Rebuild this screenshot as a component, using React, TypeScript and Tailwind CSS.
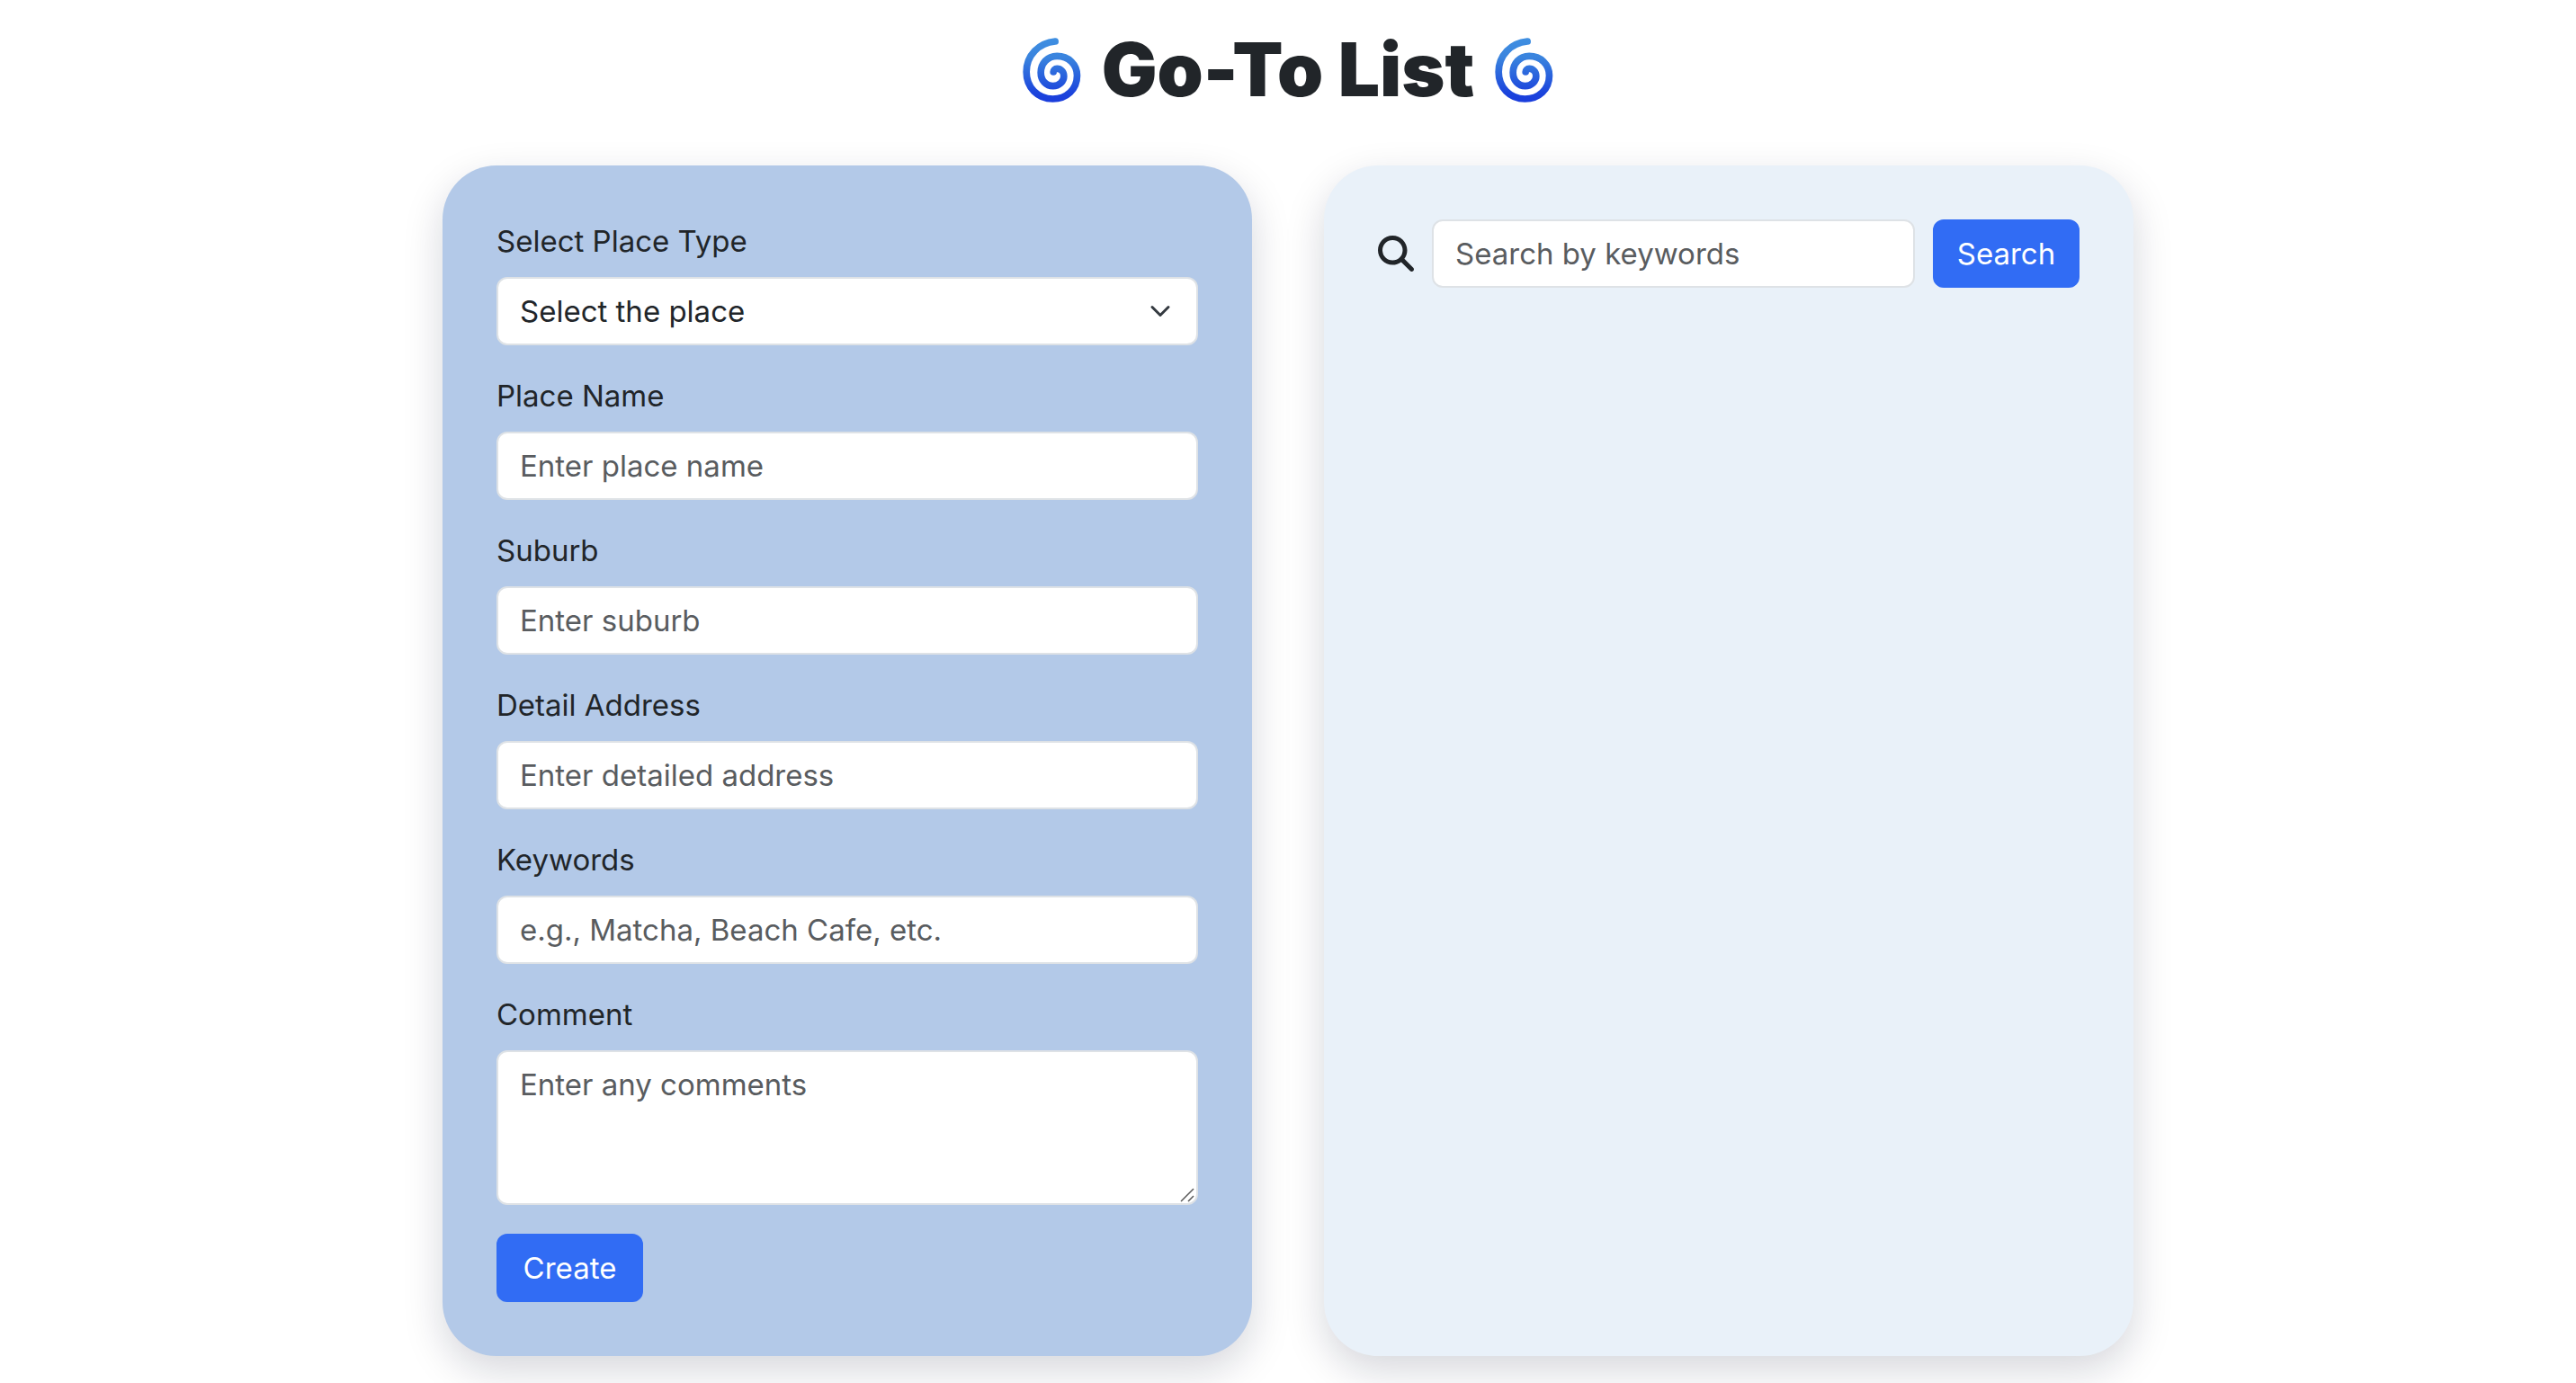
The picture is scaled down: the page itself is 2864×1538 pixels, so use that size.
import { useId } from "react";
import type { ReactNode } from "react";
import { FaMagnifyingGlass } from "react-icons/fa6";

const control =
  "block w-full rounded-xl border-2 border-[#dee2e6] bg-white px-6 py-3 text-[33px] leading-[48px] text-[#212529] placeholder:text-[#595c5f] placeholder:opacity-100 outline-none focus:border-[#86b7fe]";

const button =
  "min-w-[163px] shrink-0 cursor-pointer rounded-xl border-2 border-[#316cf4] bg-[#316cf4] px-6 py-3 text-[33px] leading-[48px] text-white hover:bg-[#2a5cd0]";

const card =
  "rounded-[60px] p-[60px] shadow-[0_16px_44px_rgba(10,18,50,0.17)]";

function Spiral() {
  const id = useId();
  return (
    <svg viewBox="45 33 200 222" className="h-[74px] w-[67px] shrink-0" fill="none" aria-hidden="true">
      <defs>
        <linearGradient id={id} gradientUnits="userSpaceOnUse" x1="0" y1="37" x2="0" y2="252">
          <stop offset="0" stopColor="#3f8fe1" />
          <stop offset="0.3" stopColor="#3a84de" />
          <stop offset="0.85" stopColor="#1b44dc" />
          <stop offset="1" stopColor="#1a3cdc" />
        </linearGradient>
      </defs>
      <path
        d="M156 48C102 53 60 94 60 150C60 202 98 240 148 240C194 240 229 208 229 162C229 124 200 97 162 97C130 97 108 122 108 152C108 178 125 197 149 197C169 197 185 182 185 164C185 149 174 139 162 139C155 139 150 144 150 150"
        stroke={`url(#${id})`}
        strokeWidth="23"
        strokeLinecap="round"
        strokeLinejoin="round"
      />
    </svg>
  );
}

function Field({ id, label, children }: { id: string; label: string; children: ReactNode }) {
  return (
    <div className="mb-8">
      <label htmlFor={id} className="mb-4 block">
        {label}
      </label>
      {children}
    </div>
  );
}

const textFields = [
  { id: "name", label: "Place Name", placeholder: "Enter place name" },
  { id: "suburb", label: "Suburb", placeholder: "Enter suburb" },
  { id: "address", label: "Detail Address", placeholder: "Enter detailed address" },
  { id: "keywords", label: "Keywords", placeholder: "e.g., Matcha, Beach Cafe, etc." },
];

export default function App() {
  return (
    <div className="overflow-x-hidden bg-white pb-[30px] font-['Inter',sans-serif] text-[33px] leading-[48px] text-[#212529]">
      <header className="flex items-center justify-center gap-[22px] pt-[30px] pb-[58px]">
        <Spiral />
        <h1 className="text-[82px] leading-[96px] font-black">Go-To List</h1>
        <Spiral />
      </header>

      <main className="mx-auto grid w-full max-w-[1880px] grid-cols-2 gap-20">
        <form className={`${card} bg-[#b3c9e8]`} onSubmit={(e) => e.preventDefault()}>
          <Field id="type" label="Select Place Type">
            <div className="relative">
              <select id="type" className={`${control} appearance-none pr-18`} defaultValue="">
                <option value="">Select the place</option>
                <option value="cafe">Cafe</option>
                <option value="restaurant">Restaurant</option>
              </select>
              <svg
                viewBox="0 0 16 16"
                className="pointer-events-none absolute top-[26px] right-[30px] size-6"
                fill="none"
                stroke="#343a40"
                strokeWidth="2"
                strokeLinecap="round"
                strokeLinejoin="round"
                aria-hidden="true"
              >
                <path d="m2 5 6 6 6-6" />
              </svg>
            </div>
          </Field>

          {textFields.map((f) => (
            <Field key={f.id} id={f.id} label={f.label}>
              <input id={f.id} type="text" placeholder={f.placeholder} className={control} />
            </Field>
          ))}

          <Field id="comment" label="Comment">
            <div className="relative">
              <textarea
                id="comment"
                rows={3}
                placeholder="Enter any comments"
                className={`${control} resize-none`}
              />
              <svg
                viewBox="0 0 16 16"
                className="pointer-events-none absolute right-1 bottom-[3px] size-4"
                stroke="#5a5a5a"
                strokeWidth="1.5"
                aria-hidden="true"
              >
                <path d="M1 15 15 1M9 15l6-6" />
              </svg>
            </div>
          </Field>

          <button type="submit" className={`${button} block`}>
            Create
          </button>
        </form>

        <section className={`${card} bg-[#e9f1f9]`}>
          <form role="search" className="flex items-center gap-5" onSubmit={(e) => e.preventDefault()}>
            <FaMagnifyingGlass className="size-10 shrink-0" aria-hidden="true" />
            <input
              type="search"
              aria-label="Search by keywords"
              placeholder="Search by keywords"
              className={`${control} min-w-0 flex-1`}
            />
            <button type="submit" className={button}>
              Search
            </button>
          </form>
        </section>
      </main>
    </div>
  );
}
